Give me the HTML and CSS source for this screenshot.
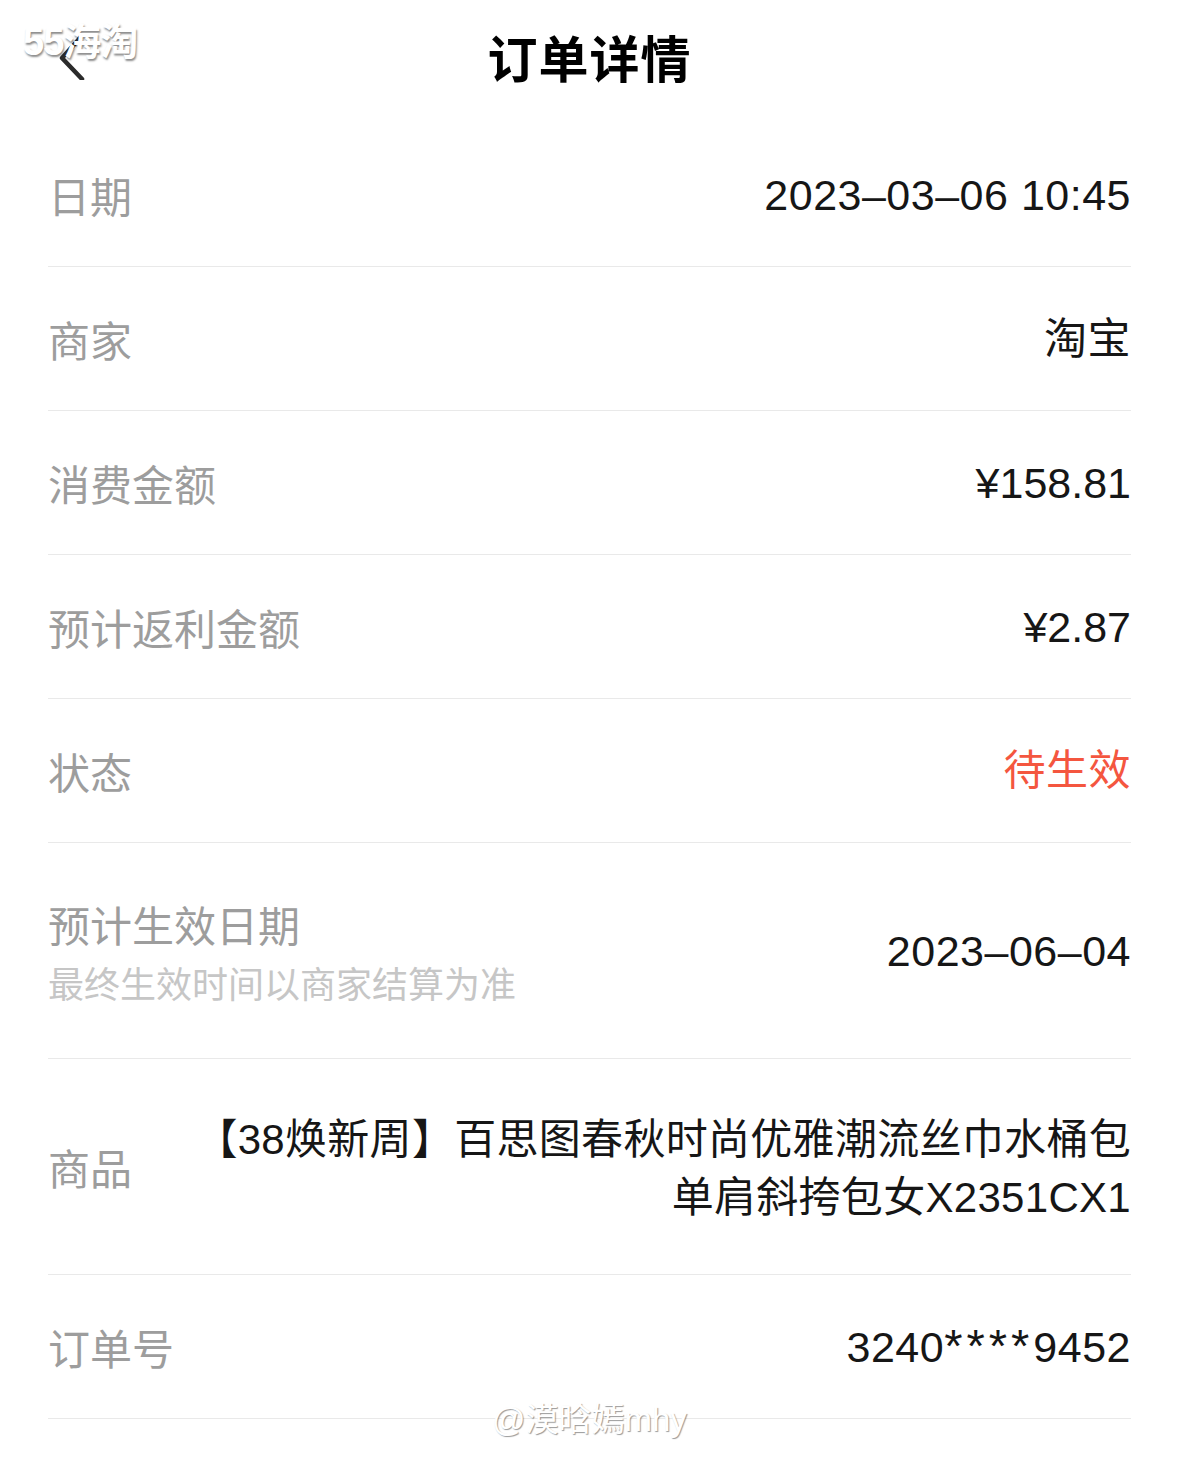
FILE: index.html
```html
<!DOCTYPE html>
<html lang="zh-CN">
<head>
    <meta charset="UTF-8">
    <meta name="viewport" content="width=device-width, initial-scale=1.0">
    <title>订单详情</title>
    <link rel="stylesheet" href="styles.css">
</head>
<body>
    <div class="page">
        <div class="header">
            <a class="back" href="#">
                <svg width="40" height="60" viewBox="0 0 40 60">
                    <polyline points="22,18 4,38 24,59" fill="none" stroke="#2b2b2b" stroke-width="4.5" stroke-linecap="round" stroke-linejoin="round"/>
                </svg>
            </a>
            <h1 class="title">订单详情</h1>
        </div>

        <div class="list">
            <div class="row">
                <div class="label">日期</div>
                <div class="value">2023–03–06 10:45</div>
            </div>
            <div class="row">
                <div class="label">商家</div>
                <div class="value cjk">淘宝</div>
            </div>
            <div class="row">
                <div class="label">消费金额</div>
                <div class="value money">¥158.81</div>
            </div>
            <div class="row">
                <div class="label">预计返利金额</div>
                <div class="value money">¥2.87</div>
            </div>
            <div class="row">
                <div class="label">状态</div>
                <div class="value cjk pending">待生效</div>
            </div>
            <div class="row tall">
                <div class="label">
                    预计生效日期
                    <div class="note">最终生效时间以商家结算为准</div>
                </div>
                <div class="value">2023–06–04</div>
            </div>
            <div class="row tall">
                <div class="label">商品</div>
                <div class="value cjk product">【38焕新周】百思图春秋时尚优雅潮流丝巾水桶包<br>单肩斜挎包女X2351CX1</div>
            </div>
            <div class="row">
                <div class="label">订单号</div>
                <div class="value">3240<span class="stars">****</span>9452</div>
            </div>
        </div>

        <!-- watermarks from the screenshot -->
        <div class="mark mark-top">55海淘</div>
        <div class="mark mark-bottom">@漠晗嫣mhy</div>
    </div>
</body>
</html>
```

FILE: styles.css
```css
body {
    margin: 0;
    padding: 0;
    background-color: #fff;
    font-family: "Liberation Sans", "Noto Sans CJK SC", sans-serif;
    color: #1c1c1c;
}
.page {
    position: relative;
    width: 1179px;
    min-height: 1475px;
    overflow: hidden;
}
.header {
    position: relative;
    height: 123px;
    display: flex;
    justify-content: center;
    align-items: flex-start;
}
.back {
    position: absolute;
    left: 58px;
    top: 20px;
    display: block;
}
.title {
    margin: 26px 0 0;
    font-family: "Noto Sans CJK SC", sans-serif;
    font-size: 50px;
    font-weight: 700;
    line-height: 60px;
    letter-spacing: 1px;
    color: #000;
}
.list {
    margin: 0 48px;
}
.row {
    display: flex;
    justify-content: space-between;
    align-items: center;
    height: 143px;
    border-bottom: 1px solid #e9e9e9;
}
.row.tall {
    height: 215px;
}
.label {
    font-family: "Noto Sans CJK SC", sans-serif;
    font-size: 42px;
    line-height: 56px;
    color: #9d9d9d;
    white-space: nowrap;
}
.note {
    font-size: 36px;
    line-height: 48px;
    margin-top: 6px;
    color: #c6c6c6;
}
.value {
    font-size: 43px;
    line-height: 58px;
    text-align: right;
    letter-spacing: 0.5px;
    color: #161616;
}
.money {
    letter-spacing: 0;
}
.cjk {
    font-family: "Liberation Sans", "Noto Sans CJK SC", sans-serif;
}
.pending {
    color: #f4563f;
    font-size: 42px;
}
.product {
    font-size: 42px;
    letter-spacing: 0.3px;
    padding-top: 4px;
}
.stars {
    font-size: 47px;
    letter-spacing: 4px;
}
.mark {
    position: absolute;
    color: #fff;
    white-space: nowrap;
    font-family: "Liberation Sans", "Noto Sans CJK SC", sans-serif;
}
.mark-top {
    left: 23px;
    top: 20px;
    font-size: 38px;
    font-weight: 700;
    line-height: 44px;
    letter-spacing: -1px;
    text-shadow: 1px 2px 2px rgba(0, 0, 0, 0.45);
}
.mark-bottom {
    left: 492px;
    top: 1398px;
    font-size: 33px;
    line-height: 44px;
    text-shadow: 1px 1px 1px rgba(0, 0, 0, 0.4);
}
```
